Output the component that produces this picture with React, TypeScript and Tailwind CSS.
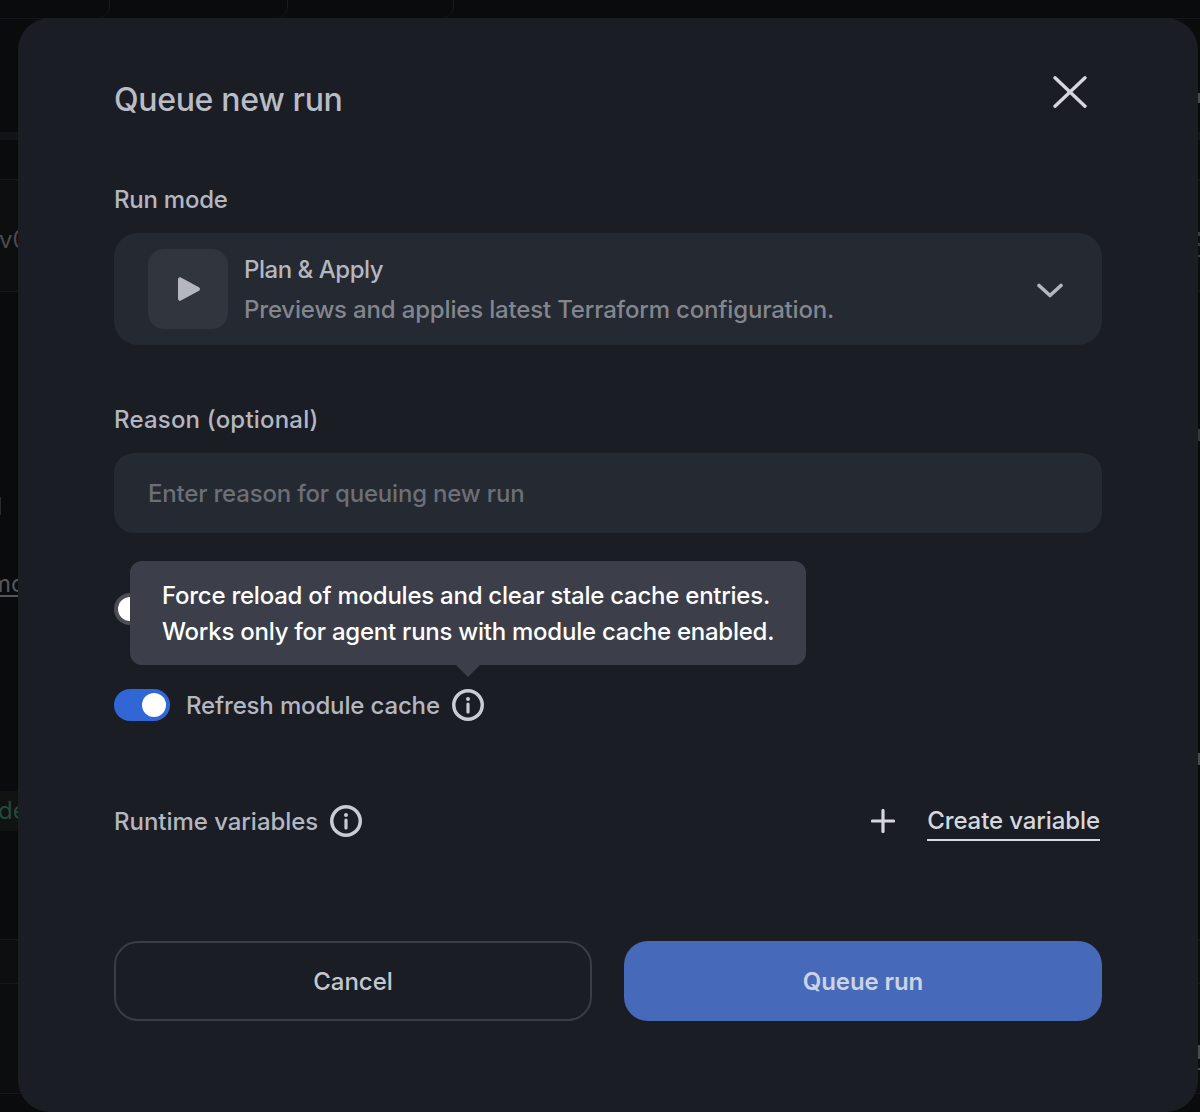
import React from 'react';

const font = { fontFamily: 'Inter, "Noto Sans", sans-serif' };

const InfoIcon: React.FC = () => (
  <svg width="32" height="32" viewBox="0 0 32 32" fill="none" className="shrink-0">
    <circle cx="16" cy="16" r="14.25" stroke="#c9ccd4" strokeWidth="3.5" />
    <circle cx="16" cy="10" r="2" fill="#c9ccd4" />
    <path d="M16 15v8" stroke="#c9ccd4" strokeWidth="3.2" strokeLinecap="round" />
  </svg>
);

const Toggle: React.FC<{ on?: boolean }> = ({ on }) =>
  on ? (
    <div className="flex h-8 w-14 shrink-0 items-center justify-end rounded-full bg-[#3166d6] pr-1">
      <div className="h-6 w-6 rounded-full bg-white" />
    </div>
  ) : (
    <div className="flex h-8 w-14 shrink-0 items-center rounded-full border-4 border-[#4b4e56] bg-[#2a2d34]">
      <div className="h-6 w-6 rounded-full bg-white" />
    </div>
  );

// dimmed page that peeks out around the dialog
const Backdrop: React.FC = () => (
  <div className="flex h-[1112px] w-full flex-col overflow-hidden whitespace-nowrap bg-[#0a0b0d]">
    <div className="flex h-[19px] shrink-0 border-b border-[#15171a]">
      <div className="h-full w-[110px] rounded-br-xl border-r border-[#1a1c20]" />
      <div className="h-full w-[178px] rounded-br-xl border-r border-[#1a1c20]" />
      <div className="h-full w-[166px] rounded-br-xl border-r border-[#1a1c20]" />
    </div>
    <div className="h-[113px] shrink-0" />
    <div className="h-2 shrink-0 bg-[#131417]" />
    <div className="h-10 shrink-0 border-b border-[#15171a]" />
    <div className="flex h-28 shrink-0 items-center border-b border-[#15171a] bg-[#0d0e10] pt-2 text-[24px] leading-none text-[#4a4b50]">
      <span className="ml-[-1px]">v0.4</span>
    </div>
    <div className="h-[205px] shrink-0" />
    <div className="h-[18px] w-px shrink-0 bg-[#2a2b2e]" />
    <div className="h-[58px] shrink-0" />
    <div className="ml-[-10px] h-[24px] w-[80px] shrink-0 border-b-2 border-[#55565a] text-[24px] leading-[22px] text-[#55565a]">
      modules
    </div>
    <div className="h-[194px] shrink-0" />
    <div className="flex h-10 w-[80px] shrink-0 items-center bg-[#101312] text-[24px] leading-none text-[#24493a]">
      <span className="ml-[-2px]">deployed</span>
    </div>
    <div className="h-[108px] shrink-0" />
    <div className="h-[45px] shrink-0 border-y border-[#15171a] bg-[#0d0e10]" />
    <div className="h-[110px] shrink-0 border-b border-[#15171a] bg-[#0c0d0f]" />
  </div>
);

const RightTicks: React.FC = () => (
  <div className="absolute right-0 top-0 flex h-[1112px] w-[2px] flex-col">
    <div className="mt-[93px] h-[10px] bg-[#4a4b4f]" />
    <div className="mt-[129px] h-1 bg-[#3a3b3f]" />
    <div className="mt-[7px] h-[3px] bg-[#3a3b3f]" />
    <div className="mt-[9px] h-[2px] bg-[#3a3b3f]" />
    <div className="mt-[172px] h-3 bg-[#35363a]" />
    <div className="mt-[312px] h-3 bg-[#4a4b4f]" />
    <div className="mt-[280px] h-[14px] bg-[#4a4b4f]" />
    <div className="mt-[9px] h-[2px] bg-[#4a4b4f]" />
  </div>
);

const App: React.FC = () => {
  return (
    <div className="relative h-[1112px] w-full overflow-hidden" style={font}>
      <Backdrop />
      <RightTicks />

      {/* Dialog */}
      <div className="absolute left-[18px] top-[18px] flex h-[1094px] w-[1180px] flex-col rounded-[32px] bg-[#1a1d24] px-24 pt-[61px]">
        <div className="flex h-10 items-center justify-between">
          <h2 className="h-10 text-[32px] font-[550] leading-[42px] tracking-[-0.32px] text-[#b9bcc4]">Queue new run</h2>
          <svg width="34" height="32" viewBox="0 0 34 32" fill="none" className="mr-[15px] mt-[-14px]">
            <path d="M2 1.8l30 28.4M32 1.8L2 30.2" stroke="#d5d7dd" strokeWidth="3.4" strokeLinecap="round" />
          </svg>
        </div>

        <label className="mt-16 block h-8 text-[24px] font-[550] leading-[34px] tracking-[-0.25px] text-[#b4b7c0]">Run mode</label>
        <div className="mt-[18px] flex h-28 items-center rounded-3xl bg-[#252932] pl-[34px] pr-[39px]">
          <div className="flex h-20 w-20 shrink-0 items-center justify-center rounded-2xl bg-[#31353e]">
            <svg width="24" height="26" viewBox="0 0 24 26" fill="none" className="ml-[2px]">
              <path d="M3 3.2L21 13 3 22.8z" fill="#b4b7c0" stroke="#b4b7c0" strokeWidth="4" strokeLinejoin="round" />
            </svg>
          </div>
          <div className="ml-4 flex-1">
            <div className="h-10 text-[24px] font-[550] leading-[42px] tracking-[-0.46px] text-[#b4b7c0]">Plan &amp; Apply</div>
            <div className="h-10 text-[24px] font-[550] leading-[42px] tracking-[-0.17px] text-[#83868f]">
              Previews and applies latest Terraform configuration.
            </div>
          </div>
          <svg width="26" height="16" viewBox="0 0 26 16" fill="none" className="mt-[2px]">
            <path d="M2 3.5l11 10 11-10" stroke="#b4b7c0" strokeWidth="3.6" strokeLinecap="round" strokeLinejoin="round" />
          </svg>
        </div>

        <label className="mt-[58px] block h-8 text-[24px] font-[550] leading-[34px] tracking-[0.2px] text-[#b4b7c0]">
          Reason (optional)
        </label>
        <div className="mt-[18px] flex h-20 items-center rounded-[20px] bg-[#252932] px-[34px] pt-[2px] text-[24px] font-[550] tracking-[-0.19px] text-[#6c6f77]">
          Enter reason for queuing new run
        </div>

        {/* Toggles and tooltip */}
        <div className="relative mt-[60px] flex flex-col gap-16">
          <Toggle />
          <div className="flex items-center">
            <Toggle on />
            <span className="ml-4 h-8 text-[24px] font-[550] leading-[34px] tracking-[-0.15px] text-[#b4b7c0]">Refresh module cache</span>
            <span className="ml-3">
              <InfoIcon />
            </span>
          </div>
          <div className="absolute left-4 top-[-32px] h-[104px] w-[676px] whitespace-nowrap rounded-xl bg-[#3c3f49] px-8 pb-4 pt-[17px] text-[24px] font-[550] leading-9 tracking-[-0.25px] text-white">
            <div>Force reload of modules and clear stale cache entries.</div>
            <div>Works only for agent runs with module cache enabled.</div>
            <div className="absolute left-[326px] top-full h-0 w-0 border-x-[12px] border-t-[12px] border-x-transparent border-t-[#3c3f49]" />
          </div>
        </div>

        <div className="mt-[84px] flex h-8 items-center justify-between">
          <div className="flex items-center">
            <span className="h-8 text-[24px] font-[550] leading-[34px] tracking-[-0.04px] text-[#b4b7c0]">Runtime variables</span>
            <span className="ml-3">
              <InfoIcon />
            </span>
          </div>
          <div className="mr-[2px] flex items-start self-start">
            <svg width="24" height="24" viewBox="0 0 24 24" fill="none" className="mt-1">
              <path d="M12 1.5v21M1.5 12h21" stroke="#d5d7dd" strokeWidth="3.2" strokeLinecap="round" />
            </svg>
            <span className="ml-8 h-[36px] border-b-2 border-[#d5d7dd] text-[24px] font-[550] leading-[32px] tracking-[-0.1px] text-[#d5d7dd]">
              Create variable
            </span>
          </div>
        </div>

        <div className="mt-[104px] grid grid-cols-2 gap-8">
          <button className="h-20 rounded-3xl border-2 border-[#3a3d45] pt-[2px] text-[24px] font-[550] text-[#c4c7cf]">Cancel</button>
          <button className="h-20 rounded-3xl bg-[#466ab9] pt-[2px] text-[24px] font-semibold tracking-[-0.1px] text-[#cdd3e2]">Queue run</button>
        </div>
      </div>
    </div>
  );
};

export default App;
